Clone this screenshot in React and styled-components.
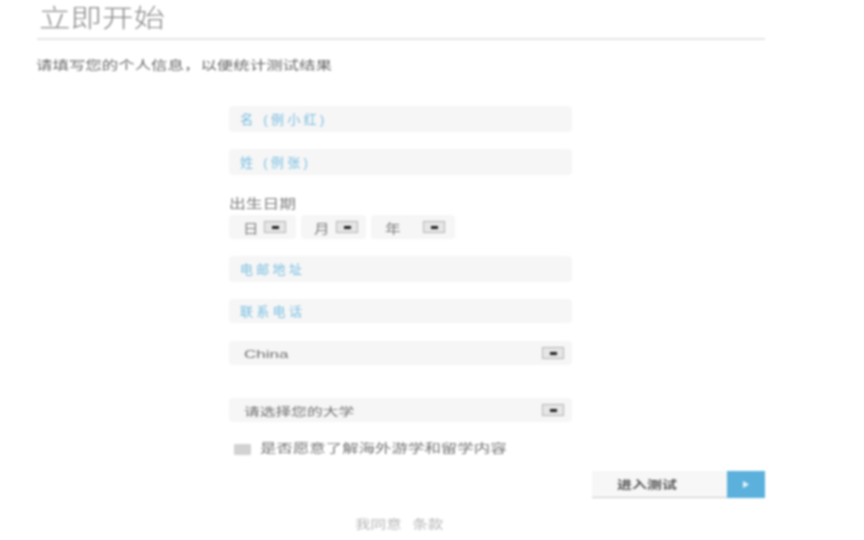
import React from "react"
import styled, { createGlobalStyle, css } from "styled-components"

const GlobalStyle = createGlobalStyle`
  html, body {
    margin: 0;
    padding: 0;
    background: #fff;
    overflow: hidden;
  }
  body {
    font-family: "Liberation Sans", "Noto Sans CJK SC", sans-serif;
  }
`

const DATE_PARTS = [
  { label: "日", width: 67, textWidth: 35, inset: 14 },
  { label: "月", width: 65, textWidth: 35, inset: 13 },
  { label: "年", width: 84, textWidth: 52, inset: 14 },
]

const Arrow = ({ wide }) => (
  <ArrowBox $wide={wide}>
    <svg width="7" height="3" viewBox="0 0 7 3">
      <rect width="7" height="3" fill="#222" />
    </svg>
  </ArrowBox>
)

const App = () => {
  return (
    <Page>
      <GlobalStyle />
      <Header>
        <Title>立即开始</Title>
      </Header>
      <Intro>请填写您的个人信息，以便统计测试结果</Intro>

      <Form>
        <TextInput placeholder="名 (例小红)" $gap={17} />
        <TextInput placeholder="姓 (例张)" $gap={20} />
        <DateLabel>出生日期</DateLabel>
        <DateRow>
          {DATE_PARTS.map((part) => (
            <DateSelect key={part.label} $width={part.width}>
              <DateCell $width={part.textWidth} $inset={part.inset}>
                <DateText>{part.label}</DateText>
              </DateCell>
              <Arrow />
            </DateSelect>
          ))}
        </DateRow>
        <TextInput placeholder="电邮地址" $gap={17} />
        <TextInput placeholder="联系电话" $gap={18} $short />
        <SelectBox $gap={33}>
          <SelectText $latin>China</SelectText>
          <Arrow wide />
        </SelectBox>
        <SelectBox $gap={20}>
          <SelectText>请选择您的大学</SelectText>
          <Arrow wide />
        </SelectBox>
        <CheckRow>
          <CheckMark />
          <CheckLabel>是否愿意了解海外游学和留学内容</CheckLabel>
        </CheckRow>
      </Form>

      <Actions>
        <StartButton>
          <StartCell>
            <StartLabel>进入测试</StartLabel>
          </StartCell>
          <StartIcon>
            <svg width="6" height="7" viewBox="0 0 6 7">
              <path d="M0 0L6 3.5L0 7z" fill="#e8f4fa" />
            </svg>
          </StartIcon>
        </StartButton>
      </Actions>

      <Terms>
        <TermsText>
          我同意<TermsGap />条款
        </TermsText>
      </Terms>
    </Page>
  )
}

export default App

// --- Styled Components ---

// 스크린샷이 가로로 늘어나 있어서 글자도 같이 늘림
const stretched = (amount) => css`
  display: inline-block;
  transform: scaleX(${amount});
  transform-origin: left center;
  white-space: nowrap;
`

const Page = styled.div`
  width: 728px;
  margin-left: 37px;
  filter: blur(0.9px);
`

const Header = styled.header`
  box-sizing: border-box;
  height: 40px;
  padding: 1px 0 0 2px;
  border-bottom: 2px solid #e6e6e6;
`

const Title = styled.h1`
  ${stretched(1.26)}
  margin: 0;
  font-family: "Noto Sans CJK SC", sans-serif;
  font-size: 25px;
  line-height: 30px;
  font-weight: 300;
  color: #8c8c8c;
`

const Intro = styled.p`
  ${stretched(1.37)}
  margin: 17px 0 0 -1px;
  font-size: 12px;
  line-height: 18px;
  color: #666;
`

const Form = styled.div`
  display: flex;
  flex-direction: column;
  width: 343px;
  margin: 31px 0 0 192px;
`

const TextInput = styled.input`
  box-sizing: border-box;
  display: block;
  width: 100%;
  height: ${(props) => (props.$short ? "24px" : "26px")};
  margin: 0 0 ${(props) => props.$gap}px;
  padding: 0 11px;
  border: 0;
  border-radius: 4px;
  background: #f6f6f6;
  font-family: inherit;
  font-size: 13px;
  letter-spacing: 3.3px;
  outline: none;

  &::placeholder {
    color: #7cc0e2;
    opacity: 1;
  }
`

const DateLabel = styled.div`
  ${stretched(1.29)}
  font-size: 13px;
  line-height: 18px;
  color: #808080;
`

const DateRow = styled.div`
  display: flex;
  gap: 5px;
  margin: 2px 0 17px;
`

const DateSelect = styled.div`
  box-sizing: border-box;
  display: flex;
  align-items: center;
  width: ${(props) => props.$width}px;
  height: 24px;
  border-radius: 4px;
  background: #f6f6f6;
`

const DateCell = styled.span`
  box-sizing: border-box;
  width: ${(props) => props.$width}px;
  padding-left: ${(props) => props.$inset}px;
`

const DateText = styled.span`
  ${stretched(1.2)}
  font-size: 13px;
  color: #808080;
`

const ArrowBox = styled.span`
  box-sizing: border-box;
  display: flex;
  align-items: center;
  justify-content: center;
  flex: none;
  width: 22px;
  height: 12px;
  margin-right: ${(props) => (props.$wide ? "8px" : "0")};
  border: 1px solid #b4b4b4;
  background: #e6e6e6;
`

const SelectBox = styled.div`
  box-sizing: border-box;
  display: flex;
  align-items: center;
  justify-content: space-between;
  height: 24px;
  margin-bottom: ${(props) => props.$gap}px;
  padding-left: 15px;
  border-radius: 4px;
  background: #f6f6f6;
`

const SelectText = styled.span`
  ${(props) => stretched(props.$latin ? 1.48 : 1.37)}
  font-size: 11.5px;
  padding-top: 1px;
  color: #707070;
`

const CheckRow = styled.label`
  display: flex;
  align-items: center;
  padding-left: 5px;
  height: 14px;
`

const CheckMark = styled.span`
  flex: none;
  width: 17px;
  height: 11px;
  margin-right: 9px;
  border-radius: 1px;
  background: #d2d2d2;
`

const CheckLabel = styled.span`
  ${stretched(1.37)}
  font-size: 12px;
  margin-top: -3px;
  color: #707070;
`

const Actions = styled.div`
  display: flex;
  justify-content: flex-end;
  margin-top: 15px;
`

const StartButton = styled.div`
  display: flex;
  width: 173px;
  height: 27px;
  border-bottom: 1px solid #c8c8c8;
  box-sizing: border-box;
  background: #f7f7f7;
`

const StartCell = styled.span`
  flex: 1;
  padding-left: 25px;
  line-height: 25px;
`

const StartLabel = styled.span`
  ${stretched(1.36)}
  font-size: 11px;
  font-weight: 700;
  color: #555;
`

const StartIcon = styled.span`
  display: flex;
  align-items: center;
  justify-content: center;
  width: 38px;
  height: 27px;
  background: #5cb1dc;
`

const Terms = styled.div`
  margin: 17px 0 0 318px;
`

const TermsText = styled.div`
  ${stretched(1.3)}
  display: inline-flex;
  font-size: 12px;
  line-height: 18px;
  color: #b4b4b4;
`

const TermsGap = styled.span`
  width: 8px;
`
